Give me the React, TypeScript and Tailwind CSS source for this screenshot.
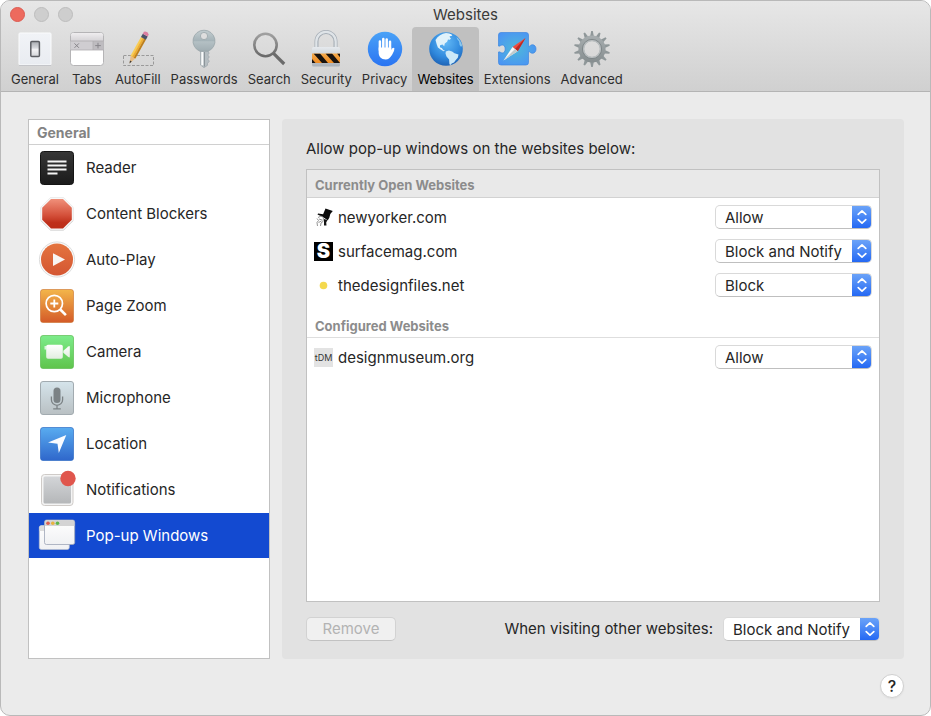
import React, { useState } from 'react';

type Permission = 'Allow' | 'Block and Notify' | 'Block';

interface Site {
  name: string;
  permission: Permission;
  icon: React.ReactNode;
}

// Toolbar icons

const GeneralIcon = () => (
  <svg width="36" height="36" viewBox="0 0 36 36" aria-hidden="true">
    <defs>
      <linearGradient id="gen-bg" x1="0" y1="0" x2="0" y2="1">
        <stop offset="0" stopColor="#f1f3f7" />
        <stop offset="1" stopColor="#e9ecf1" />
      </linearGradient>
      <linearGradient id="gen-sw" x1="0" y1="0" x2="0" y2="1">
        <stop offset="0" stopColor="#a9acb1" />
        <stop offset="0.45" stopColor="#d9dbdf" />
        <stop offset="0.5" stopColor="#f5f5f7" />
        <stop offset="1" stopColor="#d3d5d9" />
      </linearGradient>
    </defs>
    <rect x="2" y="2" width="32" height="32" rx="1" fill="url(#gen-bg)" stroke="#fbfcfd" />
    <path d="M2 34.5h32" stroke="#c4c5c9" />
    <rect x="13.8" y="10.5" width="8.6" height="15" rx="1" fill="url(#gen-sw)" stroke="#5d5f64" strokeWidth="1.5" />
  </svg>
);

const TabsIcon = () => (
  <svg width="36" height="36" viewBox="0 0 36 36" aria-hidden="true">
    <defs>
      <linearGradient id="tab-top" x1="0" y1="0" x2="0" y2="1">
        <stop offset="0" stopColor="#efedef" />
        <stop offset="1" stopColor="#d5d3d6" />
      </linearGradient>
    </defs>
    <rect x="1.5" y="1.5" width="33" height="33" rx="3" fill="#fff" stroke="#b5b4b6" />
    <path d="M2 10V4.5a2.5 2.5 0 0 1 2.5-2.5h27a2.5 2.5 0 0 1 2.5 2.5V10z" fill="url(#tab-top)" />
    <rect x="1.5" y="10" width="22.5" height="9" fill="#cfcdd1" />
    <rect x="24" y="10" width="10.5" height="9" fill="#bebcc0" />
    <path d="M1.5 10h33M1.5 19h33M24 10v9" stroke="#aeacb0" strokeWidth="0.8" />
    <path d="M5.5 12.4l4.4 4.4M9.9 12.4l-4.4 4.4M29 11.8v5.6M26.2 14.6h5.6" stroke="#87858a" />
  </svg>
);

const AutoFillIcon = () => (
  <svg width="36" height="38" viewBox="0 0 36 38" aria-hidden="true">
    <rect x="3.5" y="25.5" width="30" height="10" fill="none" stroke="#9a9a9a" strokeDasharray="3 1.5" />
    <g transform="translate(9.5 33.5) rotate(29)">
      <path d="M0 0L-2.8-7.5h5.6z" fill="#e6bc86" />
      <path d="M0 0L-1-2.8h2z" fill="#3d3a35" />
      <rect x="-2.8" y="-29" width="2" height="21.8" fill="#f8cd55" />
      <rect x="-1" y="-29" width="2" height="21.8" fill="#f1ae2d" />
      <rect x="0.9" y="-29" width="1.9" height="21.8" fill="#bd7f1c" />
      <rect x="-2.8" y="-32.5" width="5.6" height="3.8" fill="#4b5268" />
      <path d="M-2.8-32.5v-2.2q2.8-2.6 5.6 0v2.2z" fill="#dc7fa0" />
    </g>
  </svg>
);

const KeyIcon = () => (
  <svg width="36" height="40" viewBox="0 0 36 40" aria-hidden="true">
    <defs>
      <linearGradient id="key-head" x1="0" y1="0" x2="0" y2="1">
        <stop offset="0" stopColor="#c3cdd0" />
        <stop offset="0.5" stopColor="#a5b3b8" />
        <stop offset="0.55" stopColor="#b4c0c4" />
        <stop offset="1" stopColor="#a0adb2" />
      </linearGradient>
    </defs>
    <path d="M14.5 21h7l1.600 3.200-1.300 1.800 1.500 2-1.500 2 1.500 2.200-1.800 2.300v1.800L18 38.700 14.500 36z" fill="#b6bec2" stroke="#969fa4" strokeWidth="0.6" />
    <path d="M16.300 23v13.300" stroke="#fafbfb" strokeWidth="2" />
    <path d="M18.500 23v14.500" stroke="#8b9499" strokeWidth="1" />
    <path
      fillRule="evenodd"
      d="M18 1.200A10.900 10.900 0 0 0 13.800 22.200h8.400A10.900 10.900 0 0 0 18 1.200zm0 2.200a3.600 3.600 0 1 1 0 7.200 3.600 3.600 0 0 1 0-7.200z"
      fill="url(#key-head)"
      stroke="#93a0a5"
      strokeWidth="0.7"
    />
  </svg>
);

const SearchIcon = () => (
  <svg width="36" height="36" viewBox="0 0 36 36" aria-hidden="true">
    <defs>
      <linearGradient id="srch" x1="0" y1="0" x2="0" y2="1">
        <stop offset="0" stopColor="#a0a0a0" />
        <stop offset="1" stopColor="#6a6a6a" />
      </linearGradient>
    </defs>
    <circle cx="14.5" cy="14" r="11.2" fill="none" stroke="url(#srch)" strokeWidth="2.6" />
    <path d="M22.5 22.3L33.2 33" stroke="#6b6b6b" strokeWidth="3.2" />
  </svg>
);

const LockIcon = () => (
  <svg width="36" height="38" viewBox="0 0 36 38" aria-hidden="true">
    <defs>
      <linearGradient id="lock-b" x1="0" y1="0" x2="0" y2="1">
        <stop offset="0" stopColor="#e6eaee" />
        <stop offset="1" stopColor="#a9b0b8" />
      </linearGradient>
      <linearGradient id="lock-o" x1="0" y1="0" x2="0" y2="1">
        <stop offset="0" stopColor="#f3a94c" />
        <stop offset="1" stopColor="#ee8b22" />
      </linearGradient>
      <clipPath id="lock-c">
        <rect x="4" y="23.5" width="28" height="9.5" />
      </clipPath>
    </defs>
    <path d="M8.5 18V11.5a9.5 9.5 0 0 1 19 0V18" fill="none" stroke="#a5adb5" strokeWidth="4" />
    <path d="M8.3 18V11.5a9.7 9.7 0 0 1 19.4 0V18" fill="none" stroke="#dfe4e8" strokeWidth="2.2" />
    <rect x="4" y="17" width="28" height="19.5" rx="1.5" fill="url(#lock-b)" />
    <rect x="4" y="23.5" width="28" height="9.5" fill="url(#lock-o)" />
    <g clipPath="url(#lock-c)" fill="#181310">
      <path d="M5.5 23.5H12l8 9.5h-6zM17.5 23.5H24l8 9.5h-6zM4 29l3.5 4H4zM29 23.5h3v3.8z" />
    </g>
  </svg>
);

const HandIcon = () => (
  <svg width="36" height="36" viewBox="0 0 36 36" aria-hidden="true">
    <defs>
      <linearGradient id="hand" x1="0" y1="0" x2="0" y2="1">
        <stop offset="0" stopColor="#4aa2f7" />
        <stop offset="1" stopColor="#2a74f2" />
      </linearGradient>
    </defs>
    <circle cx="18" cy="18" r="17.2" fill="url(#hand)" />
    <g stroke="#fff" strokeLinecap="round" fill="none">
      <path d="M12.9 19V10.500M16.300 18V8M19.700 18V8.400M23 19v-8.300" strokeWidth="2.5" />
      <path d="M23 22.500l3.300-4.600" strokeWidth="2.4" />
    </g>
    <path d="M11.650 16.500h12.600v4l1.800-2 1.200 1c-1.800 3-3.300 8.900-8.550 8.900-4.600 0-7.050-3-7.050-7z" fill="#fff" />
  </svg>
);

const GlobeIcon = () => (
  <svg width="36" height="36" viewBox="0 0 36 36" aria-hidden="true">
    <defs>
      <radialGradient id="globe" cx="0.5" cy="0.3" r="0.75">
        <stop offset="0" stopColor="#62b9f6" />
        <stop offset="0.6" stopColor="#3089dd" />
        <stop offset="1" stopColor="#1b5cae" />
      </radialGradient>
    </defs>
    <circle cx="18" cy="18" r="16.8" fill="url(#globe)" />
    <path
      d="M7.500 9C9.800 5 13.800 2.500 18 2l3.500.6 1.700 1.500-1.700 1.600 1.500 2.100-1.900 1.300-1-.8-1 2.500-2.300 1.700-.6 2.700-1.700-1.700-2.400.7-.2 2 1.900.9 1.700 2.200 1.600.3-1.500.7-2.900-1.700-2.800-2.100-1.200-3.200z"
      fill="#e0f2fb"
    />
    <path
      d="M17.800 20.500l3.100-1 3.200.9 2.400 1.900 4 1.300-.7 3.100-2 2.200-1.800 2.600-2.300 1-1 1.400-1.300-.6-.3-4.700-2.600-3.200-1-2.800z"
      fill="#cbe8f8"
    />
    <path d="M28.500 6c2.800 2.200 4.700 5 5.600 8.200l-1 1.800-1.500-2-.5-3.500-2-2.500z" fill="#8cc8ee" />
    <path d="M20.500 3.500l2.500-.5 1.300 1.500-1.800.8z" fill="#eef8fd" />
  </svg>
);

const ExtensionsIcon = () => (
  <svg width="40" height="36" viewBox="0 0 40 36" aria-hidden="true">
    <defs>
      <radialGradient id="ext" cx="0.45" cy="0.5" r="0.6">
        <stop offset="0" stopColor="#4fb8d9" />
        <stop offset="1" stopColor="#4a94f4" />
      </radialGradient>
    </defs>
    <path
      d="M4 1.500h25a2.500 2.500 0 0 1 2.500 2.500v11.500c1.500 0 1.800-1.800 4-1.800 2 0 3.500 1.800 3.500 4.300s-1.500 4.300-3.500 4.300c-2.200 0-2.500-1.800-4-1.800V31.500a2.500 2.500 0 0 1-2.500 2.500H4a2.500 2.500 0 0 1-2.500-2.500V21c1.500-.7 2 1 3.700 1 1.800 0 3-1.700 3-4s-1.200-4-3-4c-1.700 0-2.200 1.700-3.700 1V4A2.500 2.500 0 0 1 4 1.500z"
      fill="url(#ext)"
      stroke="#3d87e0"
      strokeWidth="0.7"
    />
    <path d="M28.500 7L15.500 16l5.200 4.200z" fill="#ee4b3e" />
    <path d="M28.500 7L18 18.100l2.700 2.100z" fill="#b92a26" />
    <path d="M6.500 29.500l9-13.500 5.200 4.200z" fill="#f6f8f8" />
    <path d="M6.500 29.500L18 18.100l2.700 2.100z" fill="#c1cbcd" />
  </svg>
);

const GearIcon = () => {
  const teeth = Array.from({ length: 14 }, (_, i) => (i * 360) / 14);
  return (
    <svg width="38" height="38" viewBox="0 0 38 38" aria-hidden="true">
      <defs>
        <linearGradient id="gear" gradientUnits="userSpaceOnUse" x1="0" y1="1" x2="0" y2="37">
          <stop offset="0" stopColor="#adb3b5" />
          <stop offset="1" stopColor="#80888a" />
        </linearGradient>
      </defs>
      {teeth.map(a => (
        <path key={a} d="M17 7l1.200-6h1.600l1.200 6z" fill="#8f9799" transform={`rotate(${a} 19 19)`} />
      ))}
      <circle cx="19" cy="19" r="10.8" fill="none" stroke="url(#gear)" strokeWidth="5.6" />
      <circle cx="19" cy="19" r="9.6" fill="none" stroke="#7d8487" strokeWidth="0.9" />
      <circle cx="19" cy="19" r="8.4" fill="none" stroke="#b9bec0" strokeWidth="1.4" />
    </svg>
  );
};

// Sidebar icons, all on a 40px canvas

const ReaderIcon = () => (
  <svg width="40" height="40" viewBox="0 0 40 40" aria-hidden="true">
    <defs>
      <linearGradient id="rdr" x1="0" y1="0" x2="0" y2="1">
        <stop offset="0" stopColor="#363636" />
        <stop offset="1" stopColor="#1b1b1b" />
      </linearGradient>
    </defs>
    <rect x="3.5" y="3.5" width="33" height="33" rx="3" fill="url(#rdr)" stroke="#141414" />
    <path d="M10.5 13.5h19M10.5 17.500h19M10.5 21.500h19M10.5 25.500h10" stroke="#f5f5f5" strokeWidth="1.8" />
  </svg>
);

const BlockersIcon = () => (
  <svg width="40" height="40" viewBox="0 0 40 40" aria-hidden="true">
    <defs>
      <linearGradient id="blk" x1="0" y1="0" x2="0" y2="1">
        <stop offset="0" stopColor="#f0907a" />
        <stop offset="0.55" stopColor="#d4503a" />
        <stop offset="0.8" stopColor="#bf301b" />
        <stop offset="1" stopColor="#bb2d18" />
      </linearGradient>
    </defs>
    <path d="M13.400 4.200h13.200l9.600 9.600v13.200l-9.600 9.600H13.400l-9.600-9.600V13.800z" fill="#c8c8c8" />
    <path d="M13.400 3.500h13.200l9.600 9.600v13.200l-9.600 9.600H13.400l-9.600-9.600V13.100z" fill="#f8f8f8" stroke="#dedede" strokeWidth="0.5" />
    <path d="M14 5h12l8.800 8.800v12L26 34.600H14l-8.800-8.800v-12z" fill="url(#blk)" />
  </svg>
);

const PlayIcon = () => (
  <svg width="40" height="40" viewBox="0 0 40 40" aria-hidden="true">
    <defs>
      <linearGradient id="ply" x1="0" y1="0" x2="0" y2="1">
        <stop offset="0" stopColor="#e4743f" />
        <stop offset="1" stopColor="#d45632" />
      </linearGradient>
    </defs>
    <circle cx="20" cy="19.5" r="17.6" fill="#fafafa" stroke="#d6d6d6" strokeWidth="0.8" />
    <circle cx="20" cy="19.5" r="16" fill="url(#ply)" />
    <path d="M16 13.200L28 19.500l-12 6.500z" fill="#f8f5f3" />
  </svg>
);

const ZoomIcon = () => (
  <svg width="40" height="40" viewBox="0 0 40 40" aria-hidden="true">
    <defs>
      <linearGradient id="zm" x1="0" y1="0" x2="0" y2="1">
        <stop offset="0" stopColor="#f3b64a" />
        <stop offset="1" stopColor="#d45a28" />
      </linearGradient>
    </defs>
    <rect x="3.5" y="3.5" width="33" height="33" rx="2.5" fill="url(#zm)" stroke="#c9702b" strokeOpacity="0.6" />
    <circle cx="17.3" cy="17.5" r="8.2" fill="none" stroke="#fff" strokeWidth="1.7" />
    <path d="M17.300 13.500v8M13.300 17.500h8" stroke="#fff" strokeWidth="1.8" />
    <path d="M23.300 23.500l5.600 5.600" stroke="#fff" strokeWidth="2.6" />
  </svg>
);

const CameraIcon = () => (
  <svg width="40" height="40" viewBox="0 0 40 40" aria-hidden="true">
    <defs>
      <linearGradient id="cam" x1="0" y1="0" x2="0" y2="1">
        <stop offset="0" stopColor="#7dec8b" />
        <stop offset="1" stopColor="#5fc44c" />
      </linearGradient>
      <linearGradient id="cam-b" x1="0" y1="0" x2="0" y2="1">
        <stop offset="0" stopColor="#ffffff" />
        <stop offset="1" stopColor="#e2eee0" />
      </linearGradient>
    </defs>
    <rect x="3.5" y="3.5" width="33" height="33" rx="2.5" fill="url(#cam)" stroke="#5cbc51" strokeOpacity="0.7" />
    <rect x="7.5" y="14" width="2" height="3.5" fill="#d8f5d9" />
    <rect x="9.2" y="12.800" width="16.6" height="14" rx="1.8" fill="url(#cam-b)" />
    <path d="M26.300 18.800l5-4.300q1.500-1 1.500.5v9.500q0 1.500-1.500.5l-5-4.300z" fill="url(#cam-b)" />
  </svg>
);

const MicIcon = () => (
  <svg width="40" height="40" viewBox="0 0 40 40" aria-hidden="true">
    <defs>
      <linearGradient id="mic" x1="0" y1="0" x2="0" y2="1">
        <stop offset="0" stopColor="#d5e4eb" />
        <stop offset="1" stopColor="#b9c0c3" />
      </linearGradient>
    </defs>
    <rect x="3.5" y="3.5" width="33" height="33" rx="2.5" fill="url(#mic)" stroke="#a2abb0" />
    <rect x="16.5" y="9.5" width="7" height="15.5" rx="3.5" fill="#7b8285" />
    <path d="M14.400 18.500v3.200a5.600 5.600 0 0 0 11.200 0v-3.200M20 27.500v3M16.200 30.800h7.600" fill="none" stroke="#7b8285" strokeWidth="1.3" />
  </svg>
);

const LocationIcon = () => (
  <svg width="40" height="40" viewBox="0 0 40 40" aria-hidden="true">
    <defs>
      <linearGradient id="loc" x1="0" y1="0" x2="0" y2="1">
        <stop offset="0" stopColor="#59acf0" />
        <stop offset="1" stopColor="#2f67cb" />
      </linearGradient>
    </defs>
    <rect x="3.5" y="3.5" width="33" height="33" rx="2.5" fill="url(#loc)" stroke="#2f6cc4" strokeOpacity="0.7" />
    <path d="M29.300 11L21.800 29l-1.300-9.300L11 18.600z" fill="#fafcff" />
  </svg>
);

const NotificationsIcon = () => (
  <svg width="40" height="40" viewBox="0 0 40 40" aria-hidden="true">
    <defs>
      <linearGradient id="ntf" x1="0" y1="0" x2="0" y2="1">
        <stop offset="0" stopColor="#d3d5d8" />
        <stop offset="1" stopColor="#b5b7b9" />
      </linearGradient>
    </defs>
    <rect x="4.5" y="4.5" width="31.5" height="31" rx="3" fill="#f4f4f4" stroke="#cfcbc8" />
    <rect x="6.5" y="6.5" width="27.5" height="27" rx="1.5" fill="url(#ntf)" />
    <circle cx="31" cy="8.5" r="7.7" fill="#e0564d" />
  </svg>
);

const PopupIcon = () => (
  <svg width="40" height="40" viewBox="0 0 40 40" aria-hidden="true">
    <defs>
      <linearGradient id="pop" x1="0" y1="0" x2="0" y2="1">
        <stop offset="0" stopColor="#ffffff" />
        <stop offset="1" stopColor="#f0f1f3" />
      </linearGradient>
    </defs>
    <rect x="2.3" y="9.5" width="30" height="24" rx="2" fill="url(#pop)" stroke="#b9c0cf" strokeWidth="0.7" />
    <path d="M2.600 15v-3.500q0-1.700 1.700-1.700H8V15z" fill="#dcdcdc" />
    <rect x="7.5" y="4" width="30.2" height="24.5" rx="2" fill="url(#pop)" stroke="#9ea6b8" strokeWidth="0.8" />
    <path d="M7.900 10V6q0-1.700 1.700-1.700h26q1.700 0 1.700 1.700v4z" fill="#d4d4d4" />
    <circle cx="11" cy="7.2" r="1.8" fill="#e0604f" />
    <circle cx="15.8" cy="7.2" r="1.8" fill="#e8b33f" />
    <circle cx="20.5" cy="7.2" r="1.8" fill="#5fb64c" />
  </svg>
);

// Site favicons

const NewYorkerIcon = () => (
  <svg width="19" height="19" viewBox="0 0 19 19" aria-hidden="true">
    <path d="M11.500.5L18.800 3l-2.500 3-1 3.800-1.500 2.400-5-3.200L3.500 6.500l.6-1 5 .7z" fill="#0a0a0a" />
    <path d="M10 11l3.500 1-1.300 2.500.3 3h-2.500z" fill="#161616" />
    <path d="M4 9.500l3-1.500 2.500 1.500-.5 4-2 1.500-.5 3M3 10.500l1.500 2L3 14.500l.5 3.500M5 11l3 1M4.500 14.500l3-1.500" fill="none" stroke="#888" strokeWidth="0.9" />
  </svg>
);

const SurfaceIcon = () => (
  <span aria-hidden="true" className="flex size-[19px] items-center justify-center bg-black text-[20px] leading-none font-black text-white">
    S
  </span>
);

const DotIcon = () => (
  <svg width="19" height="19" viewBox="0 0 19 19" aria-hidden="true">
    <circle cx="9.5" cy="9.5" r="3.8" fill="#f4d94e" />
  </svg>
);

const MuseumIcon = () => (
  <span aria-hidden="true" className="flex size-[19px] items-center justify-center bg-[#e3e3e3] text-[9px] leading-none text-[#333]">
    tDM
  </span>
);

const toolbar = [
  { label: 'General', Icon: GeneralIcon },
  { label: 'Tabs', Icon: TabsIcon },
  { label: 'AutoFill', Icon: AutoFillIcon },
  { label: 'Passwords', Icon: KeyIcon },
  { label: 'Search', Icon: SearchIcon },
  { label: 'Security', Icon: LockIcon },
  { label: 'Privacy', Icon: HandIcon },
  { label: 'Websites', Icon: GlobeIcon },
  { label: 'Extensions', Icon: ExtensionsIcon },
  { label: 'Advanced', Icon: GearIcon },
];

const categories = [
  { label: 'Reader', Icon: ReaderIcon },
  { label: 'Content Blockers', Icon: BlockersIcon },
  { label: 'Auto-Play', Icon: PlayIcon },
  { label: 'Page Zoom', Icon: ZoomIcon },
  { label: 'Camera', Icon: CameraIcon },
  { label: 'Microphone', Icon: MicIcon },
  { label: 'Location', Icon: LocationIcon },
  { label: 'Notifications', Icon: NotificationsIcon },
  { label: 'Pop-up Windows', Icon: PopupIcon },
];

const openSites: Site[] = [
  { name: 'newyorker.com', permission: 'Allow', icon: <NewYorkerIcon /> },
  { name: 'surfacemag.com', permission: 'Block and Notify', icon: <SurfaceIcon /> },
  { name: 'thedesignfiles.net', permission: 'Block', icon: <DotIcon /> },
];

const configuredSites: Site[] = [
  { name: 'designmuseum.org', permission: 'Allow', icon: <MuseumIcon /> },
];

const PermissionSelect = ({ id, initial }: { id: string; initial: Permission }) => (
  <div className="relative h-6 w-[157px] overflow-hidden rounded-[5px] border border-[#d9d9d9] border-b-[#bfbfbf] bg-white">
    <select
      id={id}
      defaultValue={initial}
      className="block h-full w-full appearance-none bg-transparent pt-px pl-[9px] text-[15px] leading-[21px] text-[#262626] outline-none"
    >
      <option>Allow</option>
      <option>Block and Notify</option>
      <option>Block</option>
    </select>
    <span className="pointer-events-none absolute -inset-y-px -right-px flex w-5 items-center justify-center bg-linear-to-b from-[#6ea5f8] to-[#2165f3]">
      <svg width="12" height="16" viewBox="0 0 12 16" fill="none" stroke="#fff" strokeWidth="1.7" strokeLinecap="round" strokeLinejoin="round" aria-hidden="true">
        <path d="M2.200 5.300L6 1.800l3.800 3.500M2.200 10.700L6 14.200l3.800-3.500" />
      </svg>
    </span>
  </div>
);

const SiteList = ({ sites }: { sites: Site[] }) => (
  <ul className="pt-0.5">
    {sites.map(site => (
      <li key={site.name} className="flex h-[34px] items-center px-[7px]">
        {site.icon}
        <label htmlFor={site.name} className="ml-[5px] flex-1 pt-0.5">{site.name}</label>
        <PermissionSelect id={site.name} initial={site.permission} />
      </li>
    ))}
  </ul>
);

export default function App() {
  const [tab, setTab] = useState('Websites');
  const [category, setCategory] = useState('Pop-up Windows');

  return (
    <div className="flex min-h-screen flex-col overflow-hidden rounded-[10px] border border-[#b9b9b9] bg-[#ebebeb] font-[Inter,sans-serif] text-[15px] text-[#262626]">
      <header className="border-b border-[#b4b4b4] bg-linear-to-b from-[#e7e7e7] to-[#d0d0d0]">
        <div className="relative flex h-[26px] items-center justify-center">
          <div className="absolute left-[9px] flex gap-[9px]">
            <button aria-label="Close" className="size-[15px] rounded-full border border-[#dc5b51] bg-[#ed6a5e]" />
            <button aria-label="Minimize" className="size-[15px] rounded-full border border-[#bcbcbc] bg-[#cecece]" />
            <button aria-label="Zoom" className="size-[15px] rounded-full border border-[#bcbcbc] bg-[#cecece]" />
          </div>
          <h1 className="pt-0.5 text-[15px] text-[#3a3a3a]">Websites</h1>
        </div>
        <nav className="flex pl-[5px]">
          {toolbar.map(({ label, Icon }) => (
            <button
              key={label}
              onClick={() => setTab(label)}
              className={`flex h-16 min-w-[46px] flex-col items-center rounded-t-[4px] px-[5px] pt-0.5 ${tab === label ? 'bg-[#c0c0c0] text-black' : 'text-[#2e2e2e]'}`}
            >
              <span className="flex h-10 items-center">
                <Icon />
              </span>
              <span className="text-[13px] leading-5">{label}</span>
            </button>
          ))}
        </nav>
      </header>

      <main className="flex flex-1 gap-3 pt-[27px] pr-[26px] pl-[27px]">
        <aside className="w-[242px] shrink-0 border border-[#c1c1c1] bg-white">
          <h2 className="flex h-[25px] items-center border-b border-[#d0d0d0] pl-2 text-[14px] font-bold text-[#838383]">General</h2>
          {categories.map(({ label, Icon }) => (
            <button
              key={label}
              onClick={() => setCategory(label)}
              className={`flex h-[46px] w-full items-center gap-[9px] border-b border-white bg-clip-padding pl-2 text-left ${category === label ? 'bg-[#134ad1] text-white' : ''}`}
            >
              <Icon />
              <span className="pt-px">{label}</span>
            </button>
          ))}
        </aside>

        <section className="flex flex-1 flex-col rounded-[4px] bg-[#e2e2e2] px-6 pt-5">
          <p className="leading-5">Allow pop-up windows on the websites below:</p>
          <div className="mt-2.5 flex-1 border border-[#c1c1c1] bg-white">
            <h3 className="flex h-7 items-center border-b border-[#d2d2d2] bg-[#e9e9e9] pt-1 pl-2 text-[13px] font-bold text-[#8c8c8c]">
              Currently Open Websites
            </h3>
            <SiteList sites={openSites} />
            <h3 className="flex h-9 items-end border-b border-[#dedede] pb-px pl-2 text-[13px] font-bold text-[#8c8c8c]">
              Configured Websites
            </h3>
            <SiteList sites={configuredSites} />
          </div>
          <div className="flex h-[57px] items-center pb-1">
            <button disabled className="h-6 w-[90px] rounded-[5px] border border-[#d2d2d2] border-b-[#c2c2c2] bg-[#f0f0f0] text-[#b3b3b3]">
              Remove
            </button>
            <label htmlFor="other-sites" className="mr-2.5 ml-auto pt-px">When visiting other websites:</label>
            <PermissionSelect id="other-sites" initial="Block and Notify" />
          </div>
        </section>
      </main>

      <footer className="flex h-14 items-center justify-end pr-[26px] pb-0.5">
        <button aria-label="Help" className="size-6 rounded-full border border-[#cfcfcf] bg-white text-[16px] leading-none font-medium shadow-xs">
          ?
        </button>
      </footer>
    </div>
  );
}
